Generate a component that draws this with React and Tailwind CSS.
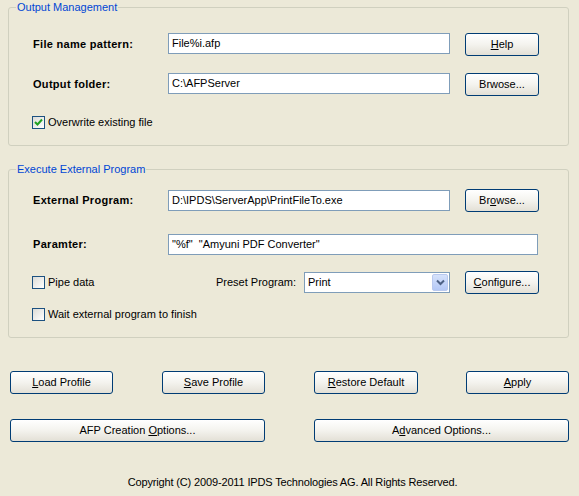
import React from 'react';

const font = { fontFamily: '"Liberation Sans", Arial, sans-serif' };

function XpButton({ children, className = '' }) {
  return (
    <button
      className={`h-[23px] rounded-[3px] border border-[#003c74] bg-gradient-to-b from-white via-[#f4f3ee] to-[#e3e0d6] text-[11px] text-black leading-none ${className}`}
    >
      {children}
    </button>
  );
}

function XpInput({ value, className = '' }) {
  return (
    <div className={`h-[21px] border border-[#7f9db9] bg-white pl-[3px] text-[11px] leading-[19px] text-black whitespace-pre overflow-hidden ${className}`}>
      {value}
    </div>
  );
}

function XpCheckbox({ checked, label }) {
  return (
    <label className="flex items-center h-[13px] text-[11px] text-black">
      <span className="w-[13px] h-[13px] border border-[#1c5180] bg-gradient-to-br from-[#dcdcd7] to-white flex items-center justify-center">
        {checked && (
          <svg width="9" height="9" viewBox="0 0 9 9">
            <path d="M1 4 L3.5 6.5 L8 1.5" stroke="#21a121" strokeWidth="2" fill="none" />
          </svg>
        )}
      </span>
      <span className="ml-[3px]">{label}</span>
    </label>
  );
}

function GroupBox({ title, children, className = '' }) {
  return (
    <fieldset className={`ml-[8px] w-[561px] border border-[#d0d0bf] rounded-[3px] px-0 ${className}`}>
      <legend className="ml-[7px] px-px text-[11px] leading-[14px] text-[#0046d5]">{title}</legend>
      {children}
    </fieldset>
  );
}

function FieldLabel({ children, className = 'w-[135px]' }) {
  return <div className={`${className} font-bold text-[11px] tracking-[0.3px] text-black`}>{children}</div>;
}

export default function App() {
  return (
    <div className="w-[579px] h-[496px] bg-[#ece9d8] overflow-hidden" style={font}>
      <GroupBox title="Output Management" className="pt-[19px] pb-[16px]">
        <div className="pl-[24px]">
          <div className="flex items-center h-[23px]">
            <FieldLabel>File name pattern:</FieldLabel>
            <XpInput value="File%i.afp" className="w-[282px] self-start" />
            <XpButton className="ml-[15px] w-[74px]"><u>H</u>elp</XpButton>
          </div>
          <div className="flex items-center h-[23px] mt-[17px]">
            <FieldLabel>Output folder:</FieldLabel>
            <XpInput value="C:\AFPServer" className="w-[282px] self-start" />
            <XpButton className="ml-[15px] w-[74px]">Brwose...</XpButton>
          </div>
          <div className="mt-[20px] -ml-px">
            <XpCheckbox checked label="Overwrite existing file" />
          </div>
        </div>
      </GroupBox>

      <GroupBox title="Execute External Program" className="mt-[16px] pt-[13px] pb-[16px]">
        <div className="pl-[24px]">
          <div className="flex items-center h-[23px]">
            <FieldLabel>External Program:</FieldLabel>
            <XpInput value="D:\IPDS\ServerApp\PrintFileTo.exe" className="w-[282px]" />
            <XpButton className="ml-[15px] w-[74px]">Br<u>o</u>wse...</XpButton>
          </div>
          <div className="flex items-center h-[23px] mt-[21px]">
            <FieldLabel>Paramter:</FieldLabel>
            <XpInput value={'"%f"  "Amyuni PDF Converter"'} className="w-[370px]" />
          </div>
          <div className="flex items-center h-[23px] mt-[15px]">
            <div className="w-[184px] -ml-px">
              <XpCheckbox label="Pipe data" />
            </div>
            <div className="w-[88px] text-[11px] text-black">Preset Program:</div>
            <div className="w-[146px] h-[21px] border border-[#7f9db9] bg-white flex items-center justify-between">
              <span className="pl-[3px] text-[11px] text-black">Print</span>
              <span className="mr-px w-[16px] h-[17px] rounded-[2px] border border-[#b9c9ef] bg-gradient-to-b from-[#d6e2fb] to-[#b4c8f6] flex items-center justify-center">
                <svg width="9" height="7" viewBox="0 0 9 7">
                  <path d="M1 1.5 L4.5 5 L8 1.5" stroke="#4d6185" strokeWidth="2" fill="none" />
                </svg>
              </span>
            </div>
            <XpButton className="ml-[15px] w-[74px]"><u>C</u>onfigure...</XpButton>
          </div>
          <div className="mt-[14px] -ml-px">
            <XpCheckbox label="Wait external program to finish" />
          </div>
        </div>
      </GroupBox>

      <div className="ml-[10px] mt-[33px] flex">
        <XpButton className="w-[103px]"><u>L</u>oad Profile</XpButton>
        <XpButton className="ml-[49px] w-[103px]"><u>S</u>ave Profile</XpButton>
        <XpButton className="ml-[49px] w-[104px]"><u>R</u>estore Default</XpButton>
        <XpButton className="ml-[48px] w-[103px]"><u>A</u>pply</XpButton>
      </div>
      <div className="ml-[10px] mt-[25px] flex">
        <XpButton className="w-[255px]">AFP Creation <u>O</u>ptions...</XpButton>
        <XpButton className="ml-[49px] w-[255px]">A<u>d</u>vanced Options...</XpButton>
      </div>
      <div className="mt-[32px] pl-[6px] text-center text-[11px] tracking-[-0.15px] text-black">
        Copyright (C) 2009-2011 IPDS Technologies AG. All Rights Reserved.
      </div>
    </div>
  );
}
